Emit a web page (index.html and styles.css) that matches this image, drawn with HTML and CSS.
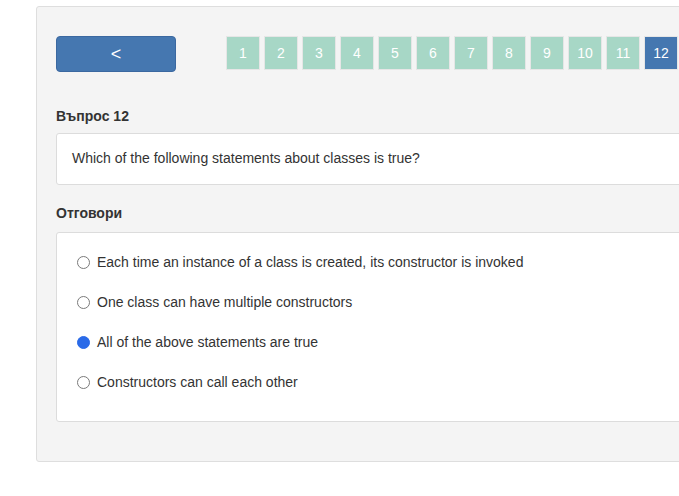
FILE: index.html
```html
<!DOCTYPE html>
<html>
<head>
<meta charset="utf-8">
<link rel="stylesheet" href="styles.css">
</head>
<body>
<div class="panel">
  <div class="nav">
    <button class="back">&lt;</button>
    <div class="pages">
      <span class="pg">1</span><span class="pg">2</span><span class="pg">3</span><span class="pg">4</span><span class="pg">5</span><span class="pg">6</span><span class="pg">7</span><span class="pg">8</span><span class="pg">9</span><span class="pg">10</span><span class="pg">11</span><span class="pg current">12</span>
    </div>
  </div>
  <h3 class="label q-label">Въпрос 12</h3>
  <div class="card question">Which of the following statements about classes is true?</div>
  <h3 class="label a-label">Отговори</h3>
  <div class="card answers">
    <label class="row"><input type="radio" name="a"><span>Each time an instance of a class is created, its constructor is invoked</span></label>
    <label class="row"><input type="radio" name="a"><span>One class can have multiple constructors</span></label>
    <label class="row"><input type="radio" name="a" checked><span>All of the above statements are true</span></label>
    <label class="row"><input type="radio" name="a"><span>Constructors can call each other</span></label>
  </div>
</div>
</body>
</html>
```
FILE: styles.css
```css
html, body {
  margin: 0;
  padding: 0;
  background: #fff;
  overflow: hidden;
  width: 679px;
  height: 496px;
  font-family: "Liberation Sans", Arial, sans-serif;
  color: #333;
}
.panel {
  margin: 6px 0 0 36px;
  width: 700px;
  background: #f4f4f4;
  border: 1px solid #dedede;
  border-radius: 3px;
  padding: 29px 19px 39px 19px;
  box-sizing: border-box;
}
.nav {
  display: flex;
  align-items: flex-start;
  gap: 50px;
}
.back {
  width: 120px;
  height: 36px;
  background: #4577b0;
  border: 1px solid #3b68a0;
  border-radius: 4px;
  color: #fff;
  font-family: "Liberation Sans", Arial, sans-serif;
  font-size: 18px;
  padding: 0;
  display: flex;
  align-items: center;
  justify-content: center;
}
.pages {
  display: flex;
  gap: 4px;
}
.pg {
  width: 34px;
  height: 34px;
  box-sizing: border-box;
  border: 1px solid #e6e6e6;
  background: #a7d7c6;
  color: #fff;
  font-size: 14px;
  display: flex;
  align-items: center;
  justify-content: center;
}
.pg.current {
  background: #4577b0;
}
.label {
  margin: 0;
  font-size: 14px;
  font-weight: bold;
  line-height: 17px;
  color: #333;
}
.q-label {
  margin-top: 36px;
  margin-bottom: 8px;
}
.a-label {
  margin-top: 20px;
  margin-bottom: 10px;
}
.card {
  background: #fff;
  border: 1px solid #dcdcdc;
  border-radius: 3px;
  font-size: 14px;
  line-height: 17px;
}
.question {
  padding: 16px 15px 17px 15px;
}
.answers {
  padding: 9px 20px 19px 20px;
}
.row {
  display: flex;
  align-items: center;
  height: 40px;
  gap: 7px;
}
.row input {
  appearance: none;
  -webkit-appearance: none;
  margin: 0;
  width: 13px;
  height: 13px;
  border: 1px solid #7a7a7a;
  border-radius: 50%;
  background: #fff;
  box-sizing: border-box;
}
.row input:checked {
  background: #2a6ae8;
  border-color: #2a6ae8;
}
```
